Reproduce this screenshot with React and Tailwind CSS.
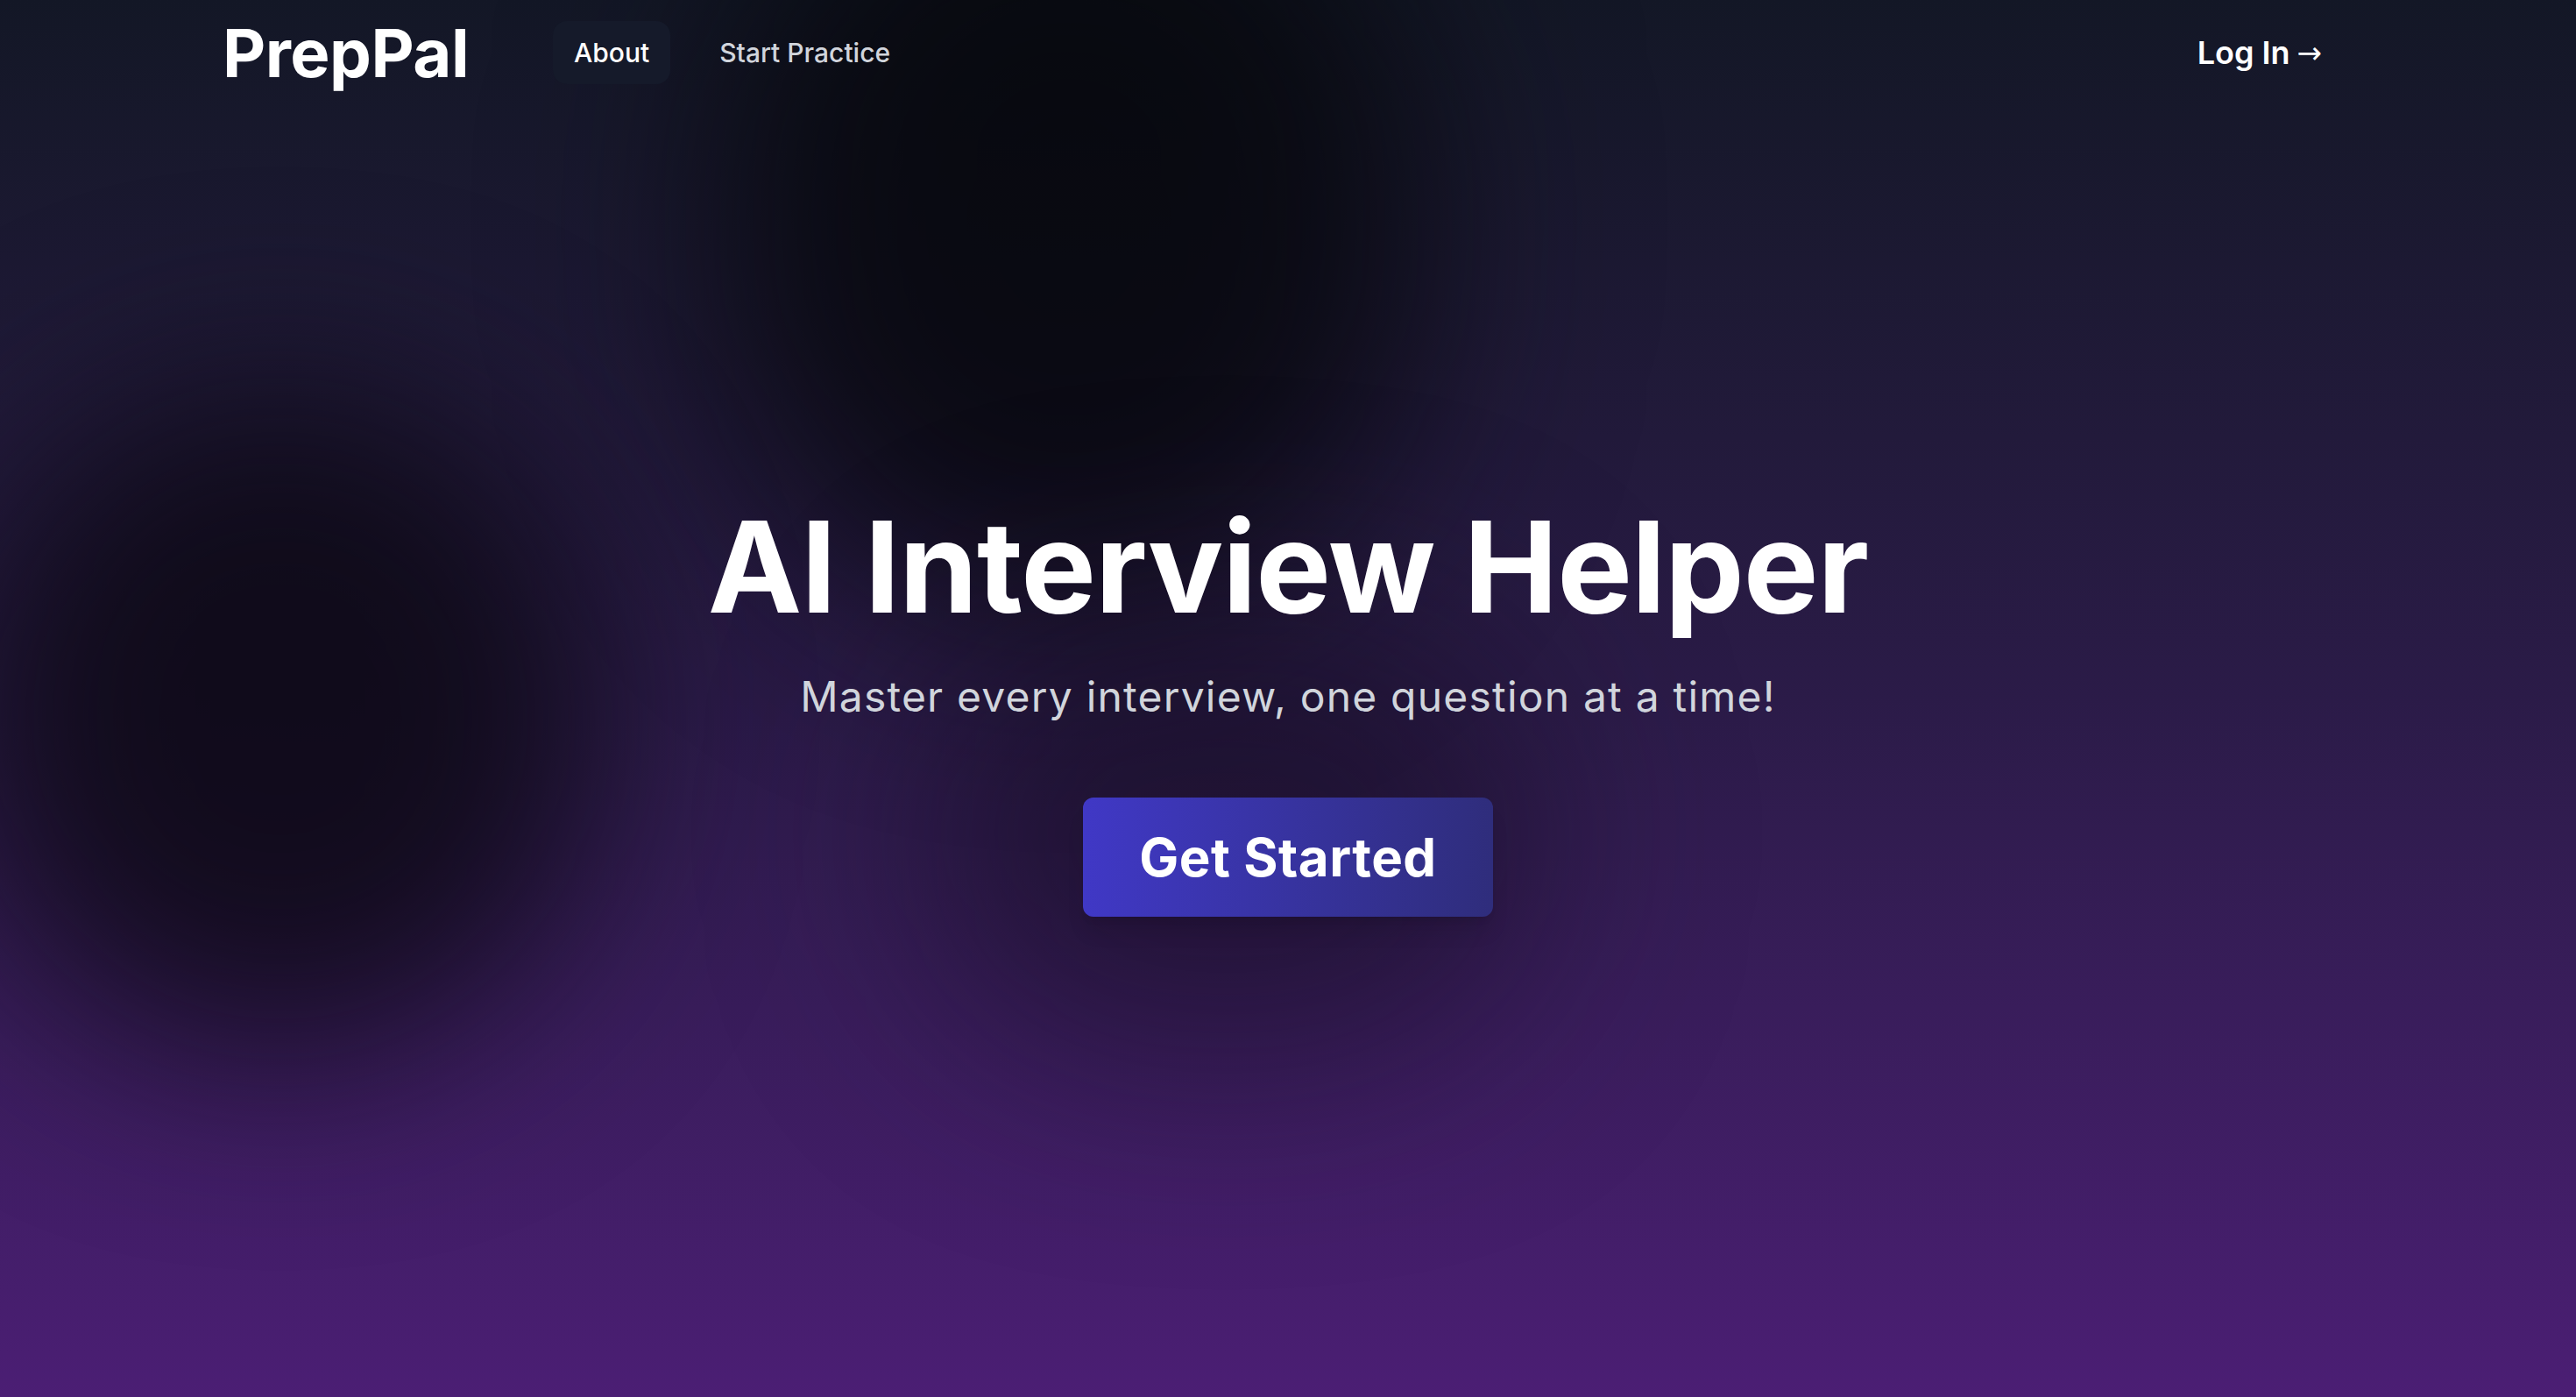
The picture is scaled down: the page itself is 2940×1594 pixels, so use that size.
import React from "react";

function Nav() {
  return (
    <nav className="relative z-10 mx-auto flex h-[120px] w-full max-w-[2560px] items-center justify-between px-16">
      <div className="flex items-center gap-[96px]">
        <a href="#" className="text-[76px] font-bold tracking-[-0.5px] text-white">
          PrepPal
        </a>
        <div className="flex items-center gap-8">
          <a href="#" className="rounded-2xl bg-[#151a2a] px-6 py-4 text-[30px] font-medium leading-[40px] text-white">
            About
          </a>
          <a href="#" className="rounded-2xl px-6 py-4 text-[30px] font-medium leading-[40px] text-gray-300">
            Start Practice
          </a>
        </div>
      </div>
      <a href="#" className="mr-[4px] flex items-center gap-2 px-8 text-[36px] font-semibold text-white">
        Log In
        <span aria-hidden="true" className="font-['DejaVu_Sans'] text-[34px] font-normal">
          &rarr;
        </span>
      </a>
    </nav>
  );
}

export default function App() {
  return (
    <div
      className="relative h-[1594px] w-full overflow-hidden bg-gradient-to-b from-[#131726] via-[#2b1b48] to-[#4b1e74]"
      style={{ fontFamily: "Inter, 'Noto Sans', sans-serif" }}
    >
      {/* dark blobs */}
      <div className="pointer-events-none absolute left-[820px] top-[-200px] h-[900px] w-[800px] rounded-full bg-[#05060a]/80 blur-[120px]" />
      <div className="pointer-events-none absolute left-[-40px] top-[440px] h-[760px] w-[720px] rounded-full bg-[#0a0810]/80 blur-[110px]" />
      <div className="pointer-events-none absolute left-[1050px] top-[700px] h-[500px] w-[700px] rounded-full bg-[#0f0a1a]/50 blur-[120px]" />

      <Nav />

      <main className="relative z-10 flex flex-col items-center pt-[455px] text-center">
        <h1 className="text-[144px] font-bold leading-none tracking-[-1px] text-white">
          AI Interview Helper
        </h1>
        <p className="mt-[44px] text-[48px] font-normal leading-[64px] tracking-[1.2px] text-gray-300">
          Master every interview, one question at a time!
        </p>
        <button className="mt-[83px] rounded-xl bg-gradient-to-r from-[#4038c6] to-[#2f2d7c] px-16 py-8 text-[60px] font-bold leading-[72px] tracking-[0.5px] text-white shadow-xl">
          Get Started
        </button>
      </main>
    </div>
  );
}
